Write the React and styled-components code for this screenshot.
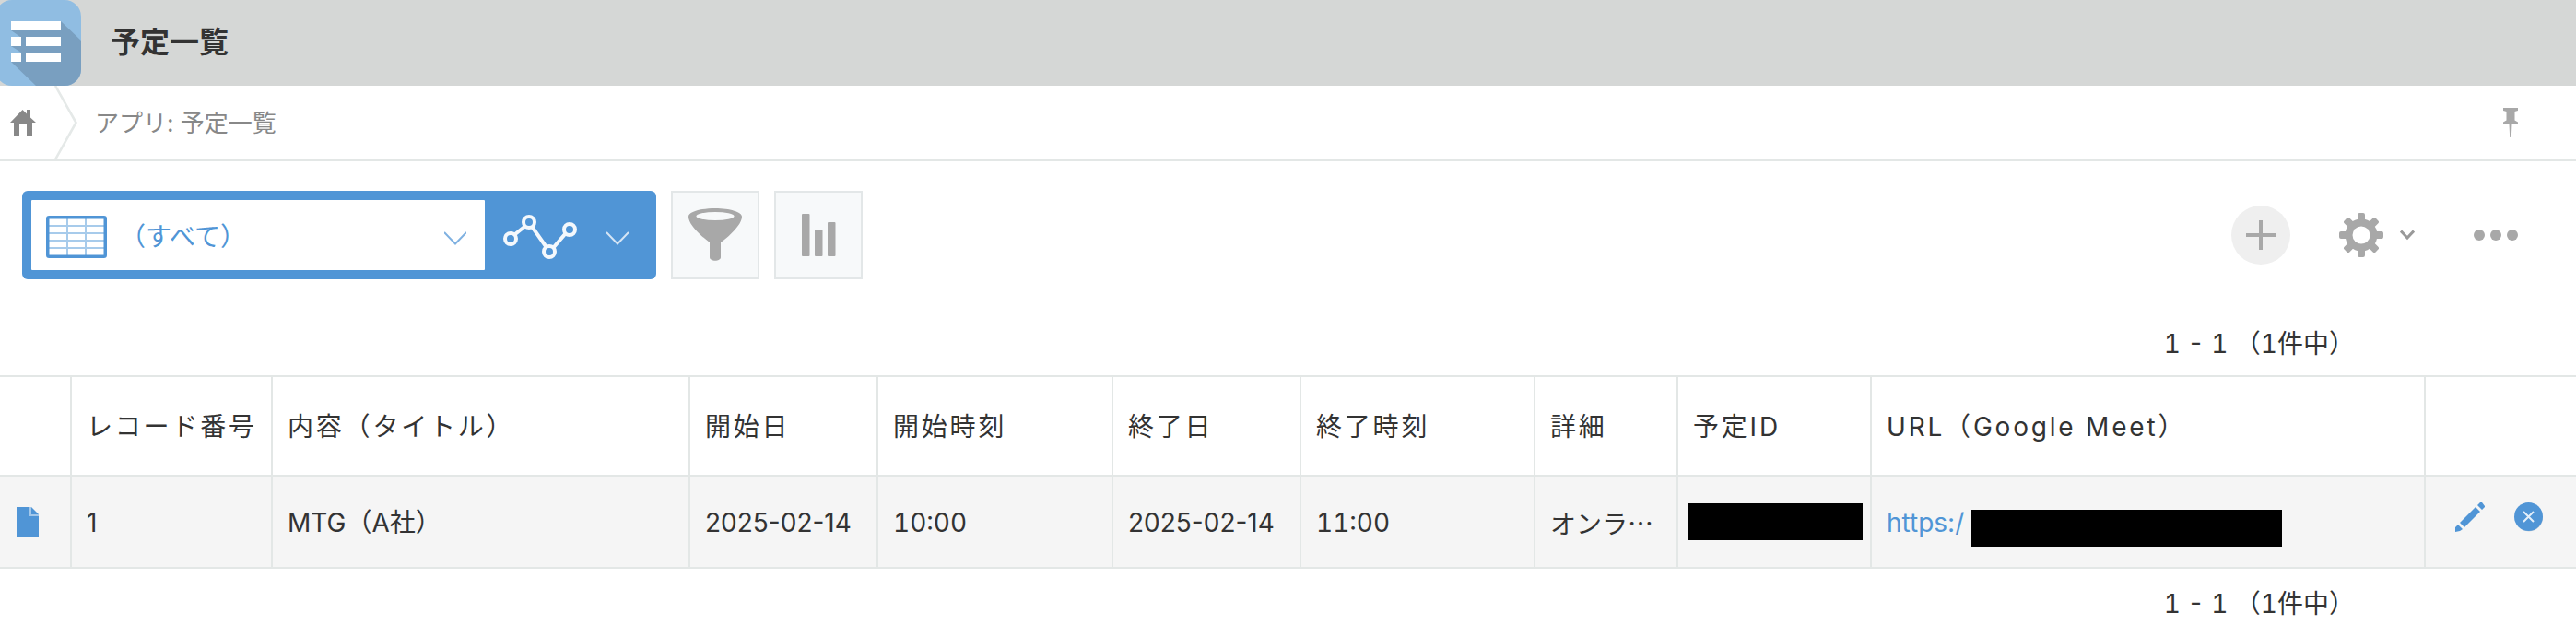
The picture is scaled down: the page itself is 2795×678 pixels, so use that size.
import React from 'react';
import styled, { createGlobalStyle } from 'styled-components';

const blue = '#5095d6';
const line = '#e3e7e6';
const grey = '#a8a8a8';

const GlobalStyle = createGlobalStyle`
  *, *::before, *::after { box-sizing: border-box; }
  body {
    margin: 0;
    background: #fff;
    color: #333;
    font-family: Inter, "Noto Sans CJK JP", sans-serif;
    font-size: 28px;
    line-height: 40px;
  }
  svg { display: block; flex: none; }
`;

const Header = styled.header`
  display: flex;
  align-items: center;
  gap: 32px;
  height: 93px;
  background: #d5d7d6;
`;

const Title = styled.h1`
  margin: 0;
  padding-bottom: 2px;
  font-size: 32px;
  line-height: 48px;
  font-weight: 700;
`;

const Breadcrumb = styled.nav`
  display: flex;
  align-items: center;
  height: 82px;
  padding-right: 63px;
  border-bottom: 2px solid ${line};
  font-size: 26px;
`;

const HomeLink = styled.a`
  display: block;
  padding: 0 20px 0 11px;
`;

const Crumb = styled.a`
  padding: 2px 0 0 18px;
  color: #888;
  text-decoration: none;
`;

const IconButton = styled.button`
  display: flex;
  align-items: center;
  gap: 18px;
  padding: 0;
  border: 0;
  background: none;
  color: ${grey};
  cursor: pointer;
`;

const PinButton = styled(IconButton)`
  margin: 0 0 0 auto;
`;

const Toolbar = styled.div`
  display: flex;
  align-items: center;
  gap: 16px;
  padding: 32px 63px 0 24px;
`;

const ViewSwitch = styled.div`
  display: flex;
  height: 96px;
  padding: 10px;
  border-radius: 6px;
  background: ${blue};
`;

const ViewButton = styled.button`
  display: flex;
  align-items: center;
  width: 492px;
  padding: 4px 20px 0 16px;
  border: 0;
  border-radius: 1px;
  background: #fff;
  color: ${blue};
  font: inherit;
  cursor: pointer;
`;

const ViewName = styled.span`
  flex: 1;
  padding-left: 14px;
  text-align: left;
`;

const GraphButton = styled(IconButton)`
  gap: 32px;
  padding: 4px 20px 0;
  color: #fff;
`;

const SquareButton = styled.button`
  display: grid;
  place-items: center;
  width: 96px;
  height: 96px;
  padding: 0;
  border: 2px solid #e3e7e8;
  background: #f7f9fa;
  color: ${grey};
  cursor: pointer;
`;

const Actions = styled.div`
  display: flex;
  align-items: center;
  margin-left: auto;
`;

const AddButton = styled(IconButton)`
  justify-content: center;
  width: 64px;
  height: 64px;
  margin-right: 53px;
  border-radius: 50%;
  background: #efefef;
`;

const SettingsButton = styled(IconButton)`
  margin-right: 64px;
`;

const Count = styled.p`
  margin: 0;
  padding: ${(p) => (p.$below ? '18px 240px 0 0' : '50px 240px 14px 0')};
  font-variant-numeric: tabular-nums;
  text-align: right;
  white-space: pre;
`;

const Table = styled.table`
  width: 100%;
  table-layout: fixed;
  border-collapse: separate;
  border-spacing: 0;
  border-top: 2px solid ${line};
`;

const Col = styled.col`
  width: ${(p) => p.$w};
`;

const cell = `
  border-bottom: 2px solid ${line};
  border-right: 2px solid ${line};
  text-align: left;
  white-space: nowrap;
  &:last-child { border-right: 0; }
`;

const Th = styled.th`
  ${cell}
  height: 108px;
  padding: 2px 0 0 16px;
  font-weight: 400;
  letter-spacing: 0.1em;
`;

const Td = styled.td`
  ${cell}
  height: 100px;
  padding: 2px 0 0 16px;
  background: #f5f5f5;
`;

const TimeCell = styled(Td)`
  font-variant-numeric: tabular-nums;
`;

const IconCell = styled(Td)`
  padding: 0 0 0 18px;
`;

const Clip = styled.div`
  padding-right: 20px;
  overflow: hidden;
  font-family: "Noto Sans CJK JP", sans-serif;
`;

const UrlLine = styled.div`
  display: flex;
  align-items: center;
`;

const Link = styled.a`
  flex: 0 0 92px;
  color: ${blue};
  text-decoration: none;
`;

const Redacted = styled.span`
  display: block;
  width: ${(p) => p.$w}px;
  height: 40px;
  background: #000;
`;

const UrlRedacted = styled(Redacted)`
  margin-top: 12px;
`;

const IdCell = styled(Td)`
  padding: 0 0 0 11px;
`;

const RowActions = styled.div`
  display: flex;
  gap: 32px;
  padding: 0 0 10px 14px;
`;

const AppLogo = () => (
  <svg width="88" height="93" viewBox="0 0 88 93" aria-hidden="true">
    <defs>
      <clipPath id="tile"><rect x="-5" width="93" height="93" rx="18" /></clipPath>
    </defs>
    <g clipPath="url(#tile)">
      <rect width="88" height="93" fill="#90bde2" />
      <path d="M66 23L88 44V93H39L12 67L23 57L12 50L22 40L12 33Z" fill="#799fc0" />
    </g>
    <path d="M12 23h54v10H12zM12 40h11v10H12zM28 40h38v10H28zM12 57h11v10H12zM28 57h38v10H28z" fill="#fff" />
  </svg>
);

const HomeIcon = () => (
  <svg width="28" height="28" viewBox="0 0 28 28" fill="#888" aria-hidden="true">
    <path d="M0 14L13.500 0L18 4.500V0h4v8.500L28 14h-4v14h-6V16h-8v12H4V14z" />
  </svg>
);

const Separator = () => (
  <svg width="26" height="80" viewBox="0 0 26 80" fill="none" stroke="#e5e9e8" strokeWidth="2.600" aria-hidden="true">
    <path d="M1 0L23.500 40L1 80" />
  </svg>
);

const PinIcon = () => (
  <svg width="16" height="32" viewBox="0 0 16 32" fill={grey} aria-hidden="true">
    <path d="M0 0h16v3l-3.500 1v9.500l3.500 2V18H9.500L8.800 32H7.200L6.500 18H0v-2.500l3.500-2V4L0 3z" />
  </svg>
);

const TableIcon = () => (
  <svg width="66" height="46" viewBox="0 0 66 46" fill="none" aria-hidden="true">
    <path d="M3 11h60M3 19h60M3 27h60M3 35h60M23 3v40M43 3v40" stroke="#a7cbeb" strokeWidth="2" />
    <rect x="1.750" y="1.750" width="62.500" height="42.500" rx="1.500" stroke={blue} strokeWidth="3.500" />
  </svg>
);

const Chevron = ({ color }) => (
  <svg width="24" height="20" viewBox="0 0 24 20" fill="none" stroke={color} strokeWidth="2" aria-hidden="true">
    <path d="M0 5L12 17.500L24 5" />
  </svg>
);

const SmallChevron = () => (
  <svg width="16" height="12" viewBox="0 0 16 12" fill="none" stroke="#999" strokeWidth="3" aria-hidden="true">
    <path d="M1 1.500L8 9L15 1.500" />
  </svg>
);

const GraphIcon = () => (
  <svg width="80" height="48" viewBox="0 0 80 48" fill="none" stroke="#f4f8fc" strokeWidth="4" aria-hidden="true">
    <path d="M13 21L23 13M32 14L46 34M55 35L67 21" />
    <circle cx="8" cy="26" r="6" />
    <circle cx="28" cy="8" r="6" />
    <circle cx="50" cy="40" r="6" />
    <circle cx="72" cy="16" r="6" />
  </svg>
);

const FunnelIcon = () => (
  <svg width="58" height="58" viewBox="0 0 58 58" aria-hidden="true">
    <path d="M0 9C0 4 13 0 29 0S58 4 58 9C58 17 46 29 35 37V53C35 58 23 58 23 53V37C12 29 0 17 0 9Z" fill={grey} />
    <ellipse cx="29" cy="8.500" rx="20.500" ry="4.500" fill="#f7f9fa" />
  </svg>
);

const BarsIcon = () => (
  <svg width="38" height="46" viewBox="0 0 38 46" fill={grey} aria-hidden="true">
    <rect x="1" width="8.500" height="46" rx="1" />
    <rect x="15" y="17" width="8.500" height="29" rx="1" />
    <rect x="29" y="9" width="8.500" height="37" rx="1" />
  </svg>
);

const PlusIcon = () => (
  <svg width="32" height="32" viewBox="0 0 32 32" fill={grey} aria-hidden="true">
    <path d="M14 0h4v14h14v4H18v14h-4V18H0v-4h14z" />
  </svg>
);

const GearIcon = () => (
  <svg width="48" height="48" viewBox="0 0 48 48" aria-hidden="true">
    <g fill={grey}>
      <circle cx="24" cy="24" r="17.500" />
      {[0, 45, 90, 135].map((a) => (
        <rect key={a} x="20" y="0" width="8" height="48" rx="2" transform={`rotate(${a} 24 24)`} />
      ))}
    </g>
    <circle cx="24" cy="24" r="9.500" fill="#fff" />
  </svg>
);

const DotsIcon = () => (
  <svg width="48" height="12" viewBox="0 0 48 12" fill={grey} aria-hidden="true">
    <circle cx="6" cy="6" r="6" />
    <circle cx="24" cy="6" r="6" />
    <circle cx="42" cy="6" r="6" />
  </svg>
);

const FileIcon = () => (
  <svg width="24" height="32" viewBox="0 0 24 32" aria-hidden="true">
    <path d="M0 0h16l8 8v24H0z" fill={blue} />
    <path d="M15 0V9H24" fill="none" stroke="#a4c8ea" strokeWidth="2" />
  </svg>
);

const PencilIcon = () => (
  <svg width="32" height="32" viewBox="0 0 32 32" fill={blue} aria-hidden="true">
    <path d="M0 32V27L3 24L8 29L5 31ZM5 22L22 5L27 10L10 27ZM24 3L27 0H29L32 4V5L29 8Z" />
  </svg>
);

const DeleteIcon = () => (
  <svg width="32" height="32" viewBox="0 0 32 32" aria-hidden="true">
    <circle cx="16" cy="16.500" r="15" fill="#cfd3d7" />
    <circle cx="15.500" cy="15.500" r="15.500" fill={blue} />
    <path d="M10 10L21 21M21 10L10 21" stroke="#e4effa" strokeWidth="2" />
  </svg>
);

const columns = [
  ['', '78px'],
  ['レコード番号', '218px'],
  ['内容（タイトル）', '453px'],
  ['開始日', '204px'],
  ['開始時刻', '255px'],
  ['終了日', '204px'],
  ['終了時刻', '254px'],
  ['詳細', '155px'],
  ['予定ID', '210px'],
  ['URL（Google Meet）', '601px'],
  ['', 'auto'],
];

export default function App() {
  return (
    <>
      <GlobalStyle />
      <Header>
        <AppLogo />
        <Title>予定一覧</Title>
      </Header>
      <Breadcrumb aria-label="パンくず">
        <HomeLink href="#home" aria-label="ホーム"><HomeIcon /></HomeLink>
        <Separator />
        <Crumb href="#app">アプリ: 予定一覧</Crumb>
        <PinButton aria-label="固定"><PinIcon /></PinButton>
      </Breadcrumb>
      <main>
        <Toolbar>
          <ViewSwitch>
            <ViewButton>
              <TableIcon />
              <ViewName>（すべて）</ViewName>
              <Chevron color="#7fb1e1" />
            </ViewButton>
            <GraphButton aria-label="グラフ">
              <GraphIcon />
              <Chevron color="#d5e5f5" />
            </GraphButton>
          </ViewSwitch>
          <SquareButton aria-label="絞り込む"><FunnelIcon /></SquareButton>
          <SquareButton aria-label="集計"><BarsIcon /></SquareButton>
          <Actions>
            <AddButton aria-label="追加"><PlusIcon /></AddButton>
            <SettingsButton aria-label="設定"><GearIcon /><SmallChevron /></SettingsButton>
            <IconButton aria-label="その他"><DotsIcon /></IconButton>
          </Actions>
        </Toolbar>
        <Count>1 - 1 （1件中）</Count>
        <Table>
          <colgroup>
            {columns.map(([, w], i) => <Col key={i} $w={w} />)}
          </colgroup>
          <thead>
            <tr>{columns.map(([name], i) => <Th key={i} scope="col">{name}</Th>)}</tr>
          </thead>
          <tbody>
            <tr>
              <IconCell><IconButton aria-label="詳細を表示"><FileIcon /></IconButton></IconCell>
              <Td>1</Td>
              <Td>MTG（A社）</Td>
              <Td>2025-02-14</Td>
              <TimeCell>10:00</TimeCell>
              <Td>2025-02-14</Td>
              <TimeCell>11:00</TimeCell>
              <Td><Clip>オンラ…</Clip></Td>
              <IdCell><Redacted $w={189} /></IdCell>
              <Td>
                <UrlLine>
                  <Link href="#meet">https:/</Link>
                  <UrlRedacted $w={337} />
                </UrlLine>
              </Td>
              <IconCell>
                <RowActions>
                  <IconButton aria-label="編集"><PencilIcon /></IconButton>
                  <IconButton aria-label="削除"><DeleteIcon /></IconButton>
                </RowActions>
              </IconCell>
            </tr>
          </tbody>
        </Table>
        <Count $below>1 - 1 （1件中）</Count>
      </main>
    </>
  );
}
